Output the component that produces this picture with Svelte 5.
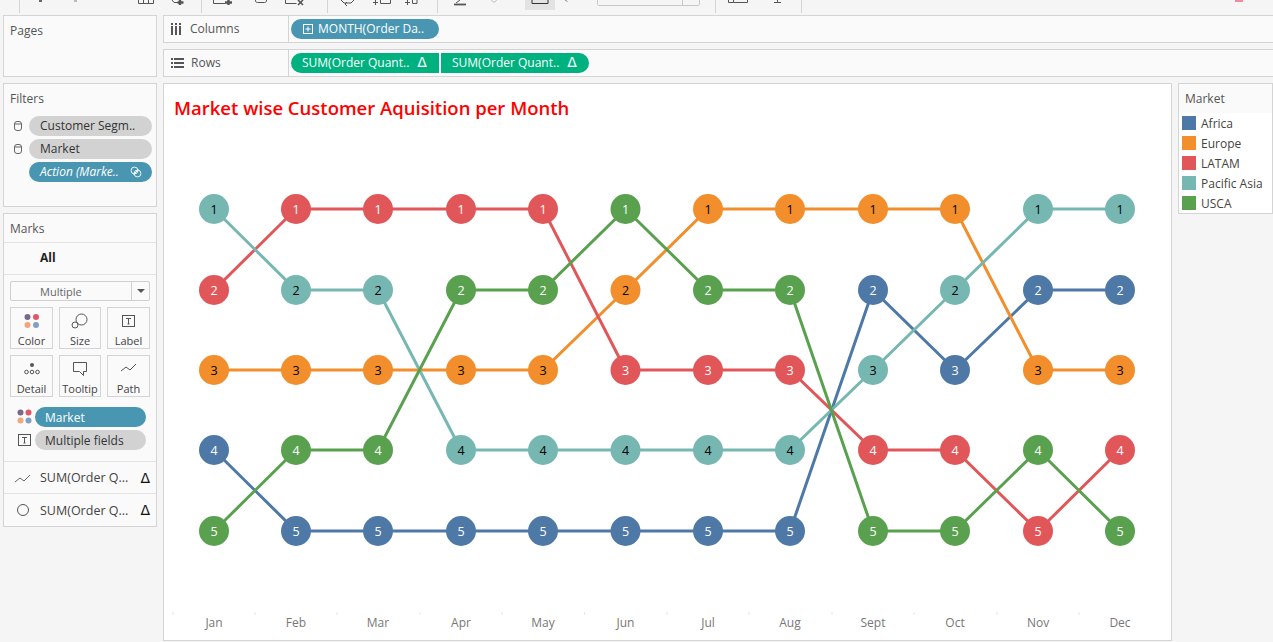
<script>
  const months = ['Jan', 'Feb', 'Mar', 'Apr', 'May', 'Jun', 'Jul', 'Aug', 'Sept', 'Oct', 'Nov', 'Dec'];
  const xs = [214, 296, 378, 461, 543, 625.5, 708, 790, 873, 955, 1038, 1120];
  const ys = [0, 209, 290, 370, 450, 531];

  const series = [
    { name: 'Africa', color: '#4e79a7', text: '#fff', ranks: [4, 5, 5, 5, 5, 5, 5, 5, 2, 3, 2, 2] },
    { name: 'Europe', color: '#f28e2b', text: '#000', ranks: [3, 3, 3, 3, 3, 2, 1, 1, 1, 1, 3, 3] },
    { name: 'LATAM', color: '#e15759', text: '#fff', ranks: [2, 1, 1, 1, 1, 3, 3, 3, 4, 4, 5, 4] },
    { name: 'Pacific Asia', color: '#76b7b2', text: '#000', ranks: [1, 2, 2, 4, 4, 4, 4, 4, 3, 2, 1, 1] },
    { name: 'USCA', color: '#59a14f', text: '#fff', ranks: [5, 4, 4, 2, 2, 1, 2, 2, 5, 5, 4, 5] }
  ];

  const points = (s) => s.ranks.map((r, i) => `${xs[i]},${ys[r]}`).join(' ');
</script>

<div class="page">
  <div class="toolbar">
    <svg width="1273" height="15" viewBox="0 0 1273 15" fill="none" stroke="#555" stroke-width="1">
      <path d="M19.5 0v13M201.500 0v13M327.500 0v13M437.500 0v13M715.500 0v13M801.500 0v13" stroke="#d4d4d4" />
      <!-- cut-off undo / redo arrows -->
      <rect x="39" y="0" width="3" height="2" fill="#666" stroke="none" />
      <rect x="74" y="0" width="3" height="2" fill="#bbb" stroke="none" />
      <!-- bottoms of the data and sheet icons -->
      <path d="M138.500 0v3.500h15v-3.500M143.500 0v3M148.500 0v3" />
      <path d="M172 0l2 2.500h4" />
      <path d="M180 0v5M177.500 2.500h6" stroke-width="2.400" />
      <path d="M213.500 0v3.500h12" />
      <path d="M228.500 0v5M225 2.500h7" stroke-width="2.400" />
      <path d="M255.500 0c0 2 .5 2.500 2 2.500h7c1.500 0 2-.5 2-2.500" />
      <path d="M285.500 0v3.500h11" />
      <path d="M298 0l5 5M303 0l-5 5" stroke-width="1.600" />
      <!-- swap, sort -->
      <path d="M341 0l3 3h7l3-3M347 2l-2 2 2 2" />
      <path d="M373 2.500h5M375.500 0v5M380.500 0v3.500h10v-3.500" />
      <path d="M405 2.500h5M407.500 0v5M412.500 0v3.500h4.500v-3.500" />
      <!-- highlight -->
      <path d="M456 3l4-3" />
      <path d="M454 4.500h12" stroke-width="1.800" />
      <path d="M491.500 0c.5 1.500 1.500 2 2.500 2s2-.5 2.500-2" stroke="#bbb" />
      <!-- fit dropdown -->
      <rect x="525" y="0" width="30" height="10" fill="#e3e3e3" stroke="none" />
      <path d="M532 3.500h16M532 0v3.500M548 0v3.500" stroke="#333" />
      <path d="M565 0l2.500 1.500" stroke="#888" />
      <path d="M597.500 0v4c0 1 .5 1.500 1.500 1.500h99c1 0 1.500-.5 1.500-1.500v-4M682.500 0v5" stroke="#c8c8c8" />
      <!-- show labels, fix axes -->
      <path d="M728.500 0v2.500h5v-2.500M733.500 2.500h14v-2.500" />
      <path d="M777.500 0v2.500M774 2.500h7" />
      <rect x="1235" y="0" width="8" height="2" fill="#f28c9a" stroke="none" />
    </svg>
  </div>

  <div class="workspace">
    <aside class="left">
      <section class="card pages"><h2>Pages</h2></section>

      <section class="card filters">
        <h2>Filters</h2>
        <div class="filter-row">
          <svg class="cyl" width="10" height="12" viewBox="0 0 10 12" fill="none" stroke="#666"><rect x="1.5" y="1.5" width="7" height="9" rx="2.5" /><path d="M1.5 4h7" /></svg>
          <span class="pill grey">Customer Segm..</span>
        </div>
        <div class="filter-row">
          <svg class="cyl" width="10" height="12" viewBox="0 0 10 12" fill="none" stroke="#666"><rect x="1.5" y="1.5" width="7" height="9" rx="2.5" /><path d="M1.5 4h7" /></svg>
          <span class="pill grey">Market</span>
        </div>
        <div class="filter-row">
          <span class="cyl-gap"></span>
          <span class="pill blue action">
            <em>Action (Marke..</em>
            <svg width="12" height="12" viewBox="0 0 12 12" fill="none" stroke="#fff" stroke-width="0.9"><circle cx="4.5" cy="4.5" r="3.4" /><circle cx="7.5" cy="7.5" r="3.4" /><path d="M3.500 8.500l5-5" /></svg>
          </span>
        </div>
      </section>

      <section class="card marks">
        <h2>Marks</h2>
        <div class="all">All</div>
        <div class="marks-body">
          <div class="select"><span>Multiple</span><i><b></b></i></div>
          <div class="mark-grid">
            <div class="mark-btn">
              <svg width="18" height="16" viewBox="0 0 18 16"><circle cx="4.500" cy="4" r="3" fill="#7b668c" /><circle cx="13" cy="4" r="3" fill="#e15769" /><circle cx="4.500" cy="12" r="3" fill="#f2a679" /><circle cx="13" cy="12" r="3" fill="#7f9fc6" /></svg>
              <span>Color</span>
            </div>
            <div class="mark-btn">
              <svg width="18" height="16" viewBox="0 0 18 16" fill="none" stroke="#555"><circle cx="10.500" cy="6.500" r="5.500" /><circle cx="4" cy="12" r="3" fill="#fafafa" /></svg>
              <span>Size</span>
            </div>
            <div class="mark-btn">
              <svg width="18" height="16" viewBox="0 0 18 16" fill="none" stroke="#555"><rect x="2.500" y="2.500" width="12" height="11" /><path d="M6 5.500h5M8.500 5.500v5.500M7.500 11h2" /></svg>
              <span>Label</span>
            </div>
            <div class="mark-btn">
              <svg width="18" height="16" viewBox="0 0 18 16" fill="none" stroke="#555"><circle cx="9" cy="4" r="2" fill="#555" stroke="none" /><circle cx="3.500" cy="11" r="1.800" /><circle cx="9" cy="11" r="1.800" /><circle cx="14.500" cy="11" r="1.800" /></svg>
              <span>Detail</span>
            </div>
            <div class="mark-btn">
              <svg width="18" height="16" viewBox="0 0 18 16" fill="none" stroke="#555"><path d="M2.500 1.500h13v9h-3v4l-4-4h-6z" /></svg>
              <span>Tooltip</span>
            </div>
            <div class="mark-btn">
              <svg width="18" height="16" viewBox="0 0 18 16" fill="none" stroke="#555"><path d="M1 10l5-4 4 3 6-6" /></svg>
              <span>Path</span>
            </div>
          </div>
          <div class="enc-row">
            <svg width="16" height="16" viewBox="0 0 16 16"><circle cx="3.500" cy="3.500" r="3" fill="#7b668c" /><circle cx="11.500" cy="3.500" r="3" fill="#e15769" /><circle cx="3.500" cy="11.500" r="3" fill="#f2a679" /><circle cx="11.500" cy="11.500" r="3" fill="#7f9fc6" /></svg>
            <span class="pill blue wide">Market</span>
          </div>
          <div class="enc-row">
            <svg width="16" height="16" viewBox="0 0 16 16" fill="none" stroke="#555"><rect x="1.500" y="2.500" width="12" height="11" /><path d="M5 5.500h5M7.500 5.500v5.500M6.500 11h2" /></svg>
            <span class="pill grey wide">Multiple fields</span>
          </div>
        </div>
        <div class="measure">
          <svg width="16" height="10" viewBox="0 0 16 10" fill="none" stroke="#666"><path d="M0 9l5-4 4 3 6-6" /></svg>
          <span>SUM(Order Q...</span><b>Δ</b>
        </div>
        <div class="measure">
          <svg width="16" height="12" viewBox="0 0 16 12" fill="none" stroke="#555"><circle cx="8" cy="6" r="5.500" /></svg>
          <span>SUM(Order Q...</span><b>Δ</b>
        </div>
      </section>
    </aside>

    <div class="center">
      <div class="shelf">
        <div class="shelf-label">
          <svg width="12" height="12" viewBox="0 0 12 12" fill="#555"><rect x="0" y="0" width="2" height="2" /><rect x="4" y="0" width="2" height="2" /><rect x="8" y="0" width="2" height="2" /><rect x="0" y="3" width="2" height="9" /><rect x="4" y="3" width="2" height="9" /><rect x="8" y="3" width="2" height="9" /></svg>
          <span>Columns</span>
        </div>
        <div class="shelf-pills">
          <span class="pill blue month">
            <svg width="10" height="10" viewBox="0 0 10 10" fill="none" stroke="#fff"><rect x="0.500" y="0.500" width="9" height="9" /><path d="M2.500 5h5M5 2.500v5" /></svg>
            MONTH(Order Da..
          </span>
        </div>
      </div>
      <div class="shelf">
        <div class="shelf-label">
          <svg width="13" height="12" viewBox="0 0 13 12" fill="#555"><rect x="0" y="1" width="2" height="2" /><rect x="3" y="1" width="10" height="2" /><rect x="0" y="5" width="2" height="2" /><rect x="3" y="5" width="10" height="2" /><rect x="0" y="9" width="2" height="2" /><rect x="3" y="9" width="10" height="2" /></svg>
          <span>Rows</span>
        </div>
        <div class="shelf-pills">
          <span class="pill green first">SUM(Order Quant.. <b>Δ</b></span>
          <span class="pill green last">SUM(Order Quant.. <b>Δ</b></span>
        </div>
      </div>

      <div class="view">
        <h1>Market wise Customer Aquisition per Month</h1>
        <svg class="chart" width="1007" height="556" viewBox="164 84 1007 556">
          {#each series as s}
            <polyline points={points(s)} fill="none" stroke={s.color} stroke-width="3" />
          {/each}
          {#each series as s}
            {#each s.ranks as r, i}
              <circle cx={xs[i]} cy={ys[r]} r="15" fill={s.color} />
              <text x={xs[i]} y={ys[r] + 4.500} fill={s.text} text-anchor="middle" class="num">{r}</text>
            {/each}
          {/each}
          {#each months as m, i}
            <path d="M{xs[i] - 41} 612v3" stroke="#e6e6e6" />
            <text x={xs[i]} y="627" text-anchor="middle" class="month-label">{m}</text>
          {/each}
        </svg>
      </div>
    </div>

    <aside class="legend">
      <h2>Market</h2>
      {#each series as s}
        <div class="legend-row"><i style="background:{s.color}"></i><span>{s.name}</span></div>
      {/each}
    </aside>
  </div>
</div>

<style>
  :global(body) {
    margin: 0;
    background: #f5f5f5;
  }

  .page {
    width: 1273px;
    height: 642px;
    overflow: hidden;
    font-family: "Open Sans", "Noto Sans", sans-serif;
    font-size: 12px;
    color: #444;
    background: #f5f5f5;
  }

  .toolbar {
    height: 15px;
  }
  .toolbar svg {
    display: block;
  }

  .workspace {
    display: flex;
    height: 627px;
  }

  .left {
    width: 154px;
    margin-left: 3px;
    display: flex;
    flex-direction: column;
    gap: 6px;
    flex: none;
  }

  .card {
    box-sizing: border-box;
    background: #fafafa;
    border: 1px solid #d4d4d4;
  }

  h2 {
    margin: 0;
    font-size: 12px;
    font-weight: 400;
    color: #555;
  }

  .pages {
    height: 62px;
    padding: 6px 6px;
  }

  .filters {
    height: 124px;
    padding: 6px 0 0 6px;
  }
  .filters h2 {
    margin-bottom: 9px;
  }

  .filter-row {
    display: flex;
    align-items: center;
    margin-bottom: 3px;
    gap: 6px;
    padding-left: 3px;
  }
  .cyl, .cyl-gap {
    width: 10px;
    flex: none;
  }

  .pill {
    box-sizing: border-box;
    height: 20px;
    display: flex;
    align-items: center;
    padding: 0 11px 2px;
    border-radius: 10px;
    white-space: nowrap;
    font-size: 12px;
  }
  .grey {
    background: #d2d2d2;
    color: #333;
  }
  .blue {
    background: #4996b2;
    color: #fff;
  }
  .green {
    background: #00b180;
    color: #fff;
  }
  .filter-row .pill {
    width: 123px;
  }
  .action {
    justify-content: space-between;
    padding-right: 10px;
  }
  .action svg {
    margin-top: 2px;
  }

  .marks {
    height: 314px;
  }
  .marks h2 {
    height: 29px;
    line-height: 29px;
    padding-left: 6px;
    border-bottom: 1px solid #e2e2e2;
    box-sizing: border-box;
  }
  .all {
    height: 32px;
    line-height: 29px;
    padding-left: 36px;
    font-weight: 700;
    color: #222;
    border-bottom: 1px solid #e2e2e2;
    box-sizing: border-box;
  }
  .marks-body {
    height: 187px;
    box-sizing: border-box;
    padding: 6px 6px 0;
    border-bottom: 1px solid #e2e2e2;
  }
  .select {
    box-sizing: border-box;
    height: 20px;
    display: flex;
    border: 1px solid #cfcfcf;
    border-radius: 2px;
    background: #fafafa;
    font-size: 11px;
    color: #666;
  }
  .select span {
    flex: 1;
    padding-left: 29px;
    line-height: 20px;
  }
  .select i {
    width: 17px;
    border-left: 1px solid #cfcfcf;
    display: flex;
    align-items: center;
    justify-content: center;
  }
  .select b {
    border: 4px solid transparent;
    border-top: 4px solid #555;
    border-bottom: 0;
  }

  .mark-grid {
    display: grid;
    grid-template-columns: 43px 42px 43px;
    grid-auto-rows: 42px;
    gap: 6px;
    margin: 6px 0 10px;
  }
  .mark-btn {
    box-sizing: border-box;
    border: 1px solid #d4d4d4;
    display: flex;
    flex-direction: column;
    align-items: center;
    padding-top: 5px;
    font-size: 11px;
    color: #444;
    line-height: 15px;
    gap: 4px;
  }
  .enc-row {
    display: flex;
    align-items: center;
    gap: 2px;
    margin: 0 0 3px 7px;
    height: 20px;
  }
  .wide {
    width: 111px;
    padding: 0 10px;
  }

  .measure {
    height: 32px;
    display: flex;
    align-items: center;
    padding: 0 6px 0 11px;
    font-size: 12.500px;
    border-bottom: 1px solid #e2e2e2;
    box-sizing: border-box;
  }
  .measure:last-child {
    border-bottom: 0;
  }
  .measure span {
    margin-left: 9px;
    flex: 1;
    white-space: nowrap;
  }
  .measure b {
    font-family: "DejaVu Sans", sans-serif;
    font-weight: 400;
    font-size: 14px;
    color: #111;
  }

  .center {
    width: 1009px;
    margin-left: 6px;
    flex: none;
    display: flex;
    flex-direction: column;
    gap: 6px;
  }

  .shelf {
    box-sizing: border-box;
    height: 28px;
    display: flex;
    background: #fafafa;
    border-top: 1px solid #d4d4d4;
    border-bottom: 1px solid #d4d4d4;
    border-left: 1px solid #d4d4d4;
    width: 1110px;
  }
  .shelf-label {
    box-sizing: border-box;
    width: 125px;
    display: flex;
    align-items: center;
    gap: 7px;
    padding: 0 0 1px 7px;
    border-right: 1px solid #d4d4d4;
    color: #555;
  }
  .shelf-pills {
    display: flex;
    align-items: center;
    gap: 2px;
    padding-left: 2px;
  }
  .month {
    width: 148px;
    gap: 5px;
    padding: 0 10px 2px 12px;
  }
  .month svg {
    margin-top: 2px;
  }
  .first, .last {
    width: 148px;
    gap: 8px;
  }
  .first {
    border-radius: 10px 0 0 10px;
  }
  .last {
    border-radius: 0 10px 10px 0;
  }
  .pill b {
    font-family: "DejaVu Sans", sans-serif;
    font-weight: 400;
    font-size: 14px;
  }

  .view {
    box-sizing: border-box;
    width: 1009px;
    height: 558px;
    background: #fff;
    border: 1px solid #d4d4d4;
    position: relative;
  }
  .view h1 {
    margin: 0;
    padding: 11px 0 0 10px;
    font-size: 18.500px;
    line-height: 26px;
    font-weight: 600;
    color: #f00;
    font-family: "Open Sans", "Noto Sans", sans-serif;
  }
  .chart {
    position: absolute;
    left: 0;
    top: 0;
  }
  .num {
    font-size: 12.500px;
  }
  .month-label {
    font-size: 12px;
    fill: #777;
  }

  .legend {
    box-sizing: border-box;
    width: 95px;
    height: 131px;
    margin-left: 6px;
    margin-top: 68px;
    flex: none;
    border: 1px solid #d4d4d4;
    background: #fff;
  }
  .legend h2 {
    height: 29px;
    line-height: 29px;
    padding-left: 6px;
    background: #fafafa;
    color: #555;
  }
  .legend-row {
    display: flex;
    align-items: center;
    gap: 5px;
    height: 20px;
    padding-left: 3px;
    white-space: nowrap;
  }
  .legend-row i {
    width: 14px;
    height: 14px;
    flex: none;
  }
</style>
